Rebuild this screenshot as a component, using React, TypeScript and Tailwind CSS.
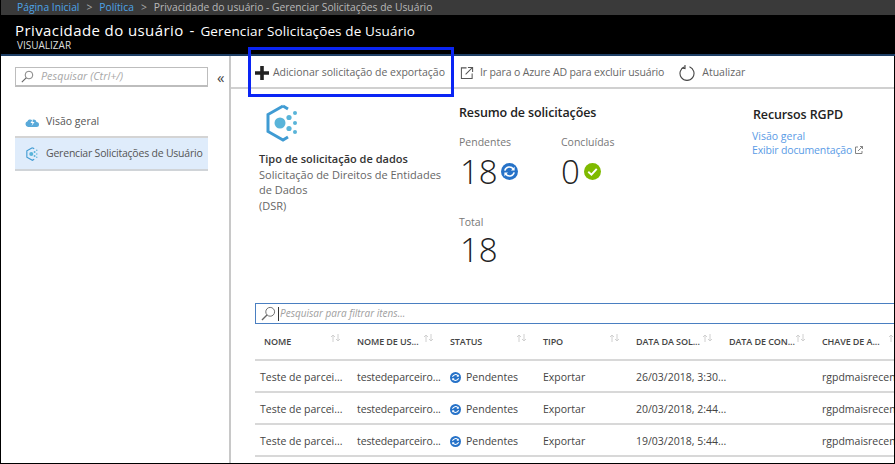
import React from "react";

const font = { fontFamily: '"Open Sans", "Noto Sans", sans-serif' };

function HexIcon({ size }: { size: number }) {
  return (
    <svg width={size} height={size} viewBox="0 0 36 38" fill="none">
      <path d="M19 2 L4 10.5 V27.5 L19 36 L24 33 M24 5 L19 2" stroke="#3f9bd3" strokeWidth="3" fill="none" />
      <circle cx="16" cy="19" r="5.5" fill="#59b4d9" />
      <circle cx="25" cy="13.5" r="2.6" fill="#59b4d9" />
      <circle cx="25" cy="24.5" r="2.6" fill="#59b4d9" />
      <circle cx="31" cy="9" r="2" fill="#59b4d9" />
      <circle cx="31" cy="19" r="2" fill="#59b4d9" />
      <circle cx="31" cy="28" r="2" fill="#59b4d9" />
    </svg>
  );
}

function SyncDot({ size }: { size: number }) {
  return (
    <svg width={size} height={size} viewBox="0 0 16 16" className="shrink-0">
      <circle cx="8" cy="8" r="8" fill="#2672c8" />
      <path d="M3.6 7.2 A4.5 4.5 0 0 1 11.6 5.6" stroke="#fff" strokeWidth="1.5" fill="none" />
      <path d="M12.4 8.8 A4.5 4.5 0 0 1 4.4 10.4" stroke="#fff" strokeWidth="1.5" fill="none" />
      <path d="M12.8 3.6 V7 H9.4 Z" fill="#fff" />
      <path d="M3.2 12.4 V9 H6.6 Z" fill="#fff" />
    </svg>
  );
}

function SearchGlass({ size }: { size: number }) {
  return (
    <svg width={size} height={size} viewBox="0 0 16 16" fill="none" stroke="#666" strokeWidth="1">
      <circle cx="9.8" cy="6.2" r="4.7" />
      <path d="M6.4 9.6 L1 15" strokeWidth="1.4" />
    </svg>
  );
}

function SortArrows() {
  return (
    <svg width="11" height="8" viewBox="0 0 11 8" fill="none" stroke="#d0d0d0" strokeWidth="1" className="absolute top-[-1px] right-[3px]">
      <path d="M3 8 V1 M1 3 L3 1 L5 3" />
      <path d="M8 0 V7 M6 5 L8 7 L10 5" />
    </svg>
  );
}

const columns = ["NOME", "NOME DE US...", "STATUS", "TIPO", "DATA DA SOL...", "DATA DE CON...", "CHAVE DE A..."];
const rows = [
  "26/03/2018, 3:30...",
  "20/03/2018, 2:44...",
  "19/03/2018, 5:44...",
];

export default function App() {
  return (
    <div className="relative w-[895px] h-[464px] overflow-hidden bg-white flex flex-col border-l border-black" style={font}>
      <div className="h-[15px] bg-[#3a3a3a] flex items-center pl-4 text-[10.3px] leading-none whitespace-nowrap text-[#b8b8b8]">
        <span className="text-[#4da3e6]">Página Inicial</span>
        <span className="mx-[7px] text-[#aaa]">&gt;</span>
        <span className="text-[#4da3e6]">Política</span>
        <span className="mx-[7px] text-[#aaa]">&gt;</span>
        <span>Privacidade do usuário - Gerenciar Solicitações de Usuário</span>
      </div>
      <div className="h-[41px] bg-black border-b-2 border-[#1e3f66] pl-[14px] pt-[5px] text-white whitespace-nowrap">
        <div className="flex items-baseline leading-[20px]">
          <span className="text-[15px] tracking-[0.027em]">Privacidade do usuário</span>
          <span className="text-[15px] mx-[6px]">-</span>
          <span className="text-[13.5px] tracking-[0.01em]">Gerenciar Solicitações de Usuário</span>
        </div>
        <div className="text-[10px] leading-[10px] -mt-[1px] pl-[2px] text-[#ddd]">VISUALIZAR</div>
      </div>
      <div className="flex flex-1 min-h-0">
        <div className="w-[230px] shrink-0 border-r-2 border-[#c8c8c8] pt-[11px] pl-[14px]">
          <div className="flex items-center">
            <div className="w-[193px] h-[20px] border border-[#bdbdbd] border-b-2 flex items-center pl-[5px] gap-[7px]">
              <SearchGlass size={13} />
              <span className="text-[10.8px] italic text-[#a8a8a8]">Pesquisar (Ctrl+/)</span>
            </div>
            <span className="ml-[9px] text-[15px] leading-none text-[#444]">«</span>
          </div>
          <div className="mt-[20px] w-[193px] h-[31px] pt-[1px] flex items-center pl-[10px] gap-[7px] text-[10.5px] text-[#555] border-b-2 border-[#d4d4d4]">
            <svg width="14" height="9" viewBox="0 0 14 9"><path d="M3 9 A3 3 0 0 1 2.5 3.2 A3 3 0 0 1 7 2 A3 3 0 0 1 11.5 4 A2.5 2.5 0 0 1 11.5 9 Z" fill="#59a9d9" /><path d="M8 1 L5.5 5 H7.5 L6.5 8 L9.5 4 H7.5 Z" fill="#fff" /></svg>
            <span>Visão geral</span>
          </div>
          <div className="w-[193px] h-[33px] pt-[1px] bg-[#dfecfb] border-b-2 border-[#d0d4d8] flex items-center pl-[10px] gap-[7px] text-[10.5px] text-[#555] whitespace-nowrap tracking-[-0.02em]">
            <HexIcon size={14} />
            <span>Gerenciar Solicitações de Usuário</span>
          </div>
        </div>
        <div className="flex-1 min-w-0 flex flex-col overflow-hidden border-r border-black">
          <div className="h-[33px] shrink-0 border-b-2 border-[#d0d0d0] flex items-center pl-[23px] pt-[2px] text-[10.5px] text-[#666] whitespace-nowrap">
            <svg width="16" height="16" viewBox="0 0 16 16" fill="#222" className="shrink-0"><path d="M6.2 1 H9.8 V6.2 H15 V9.8 H9.8 V15 H6.2 V9.8 H1 V6.2 H6.2 Z" /></svg>
            <span className="ml-[3px] tracking-[-0.003em]">Adicionar solicitação de exportação</span>
            <svg width="14" height="14" viewBox="0 0 15 15" fill="none" stroke="#555" strokeWidth="1.1" className="ml-[15px] shrink-0">
              <path d="M7 2 H1.5 V13.5 H13 V8" /><path d="M6 9 L13.5 1.5 M8.5 1.5 H13.5 V6.5" />
            </svg>
            <span className="ml-[6px] tracking-[-0.012em]">Ir para o Azure AD para excluir usuário</span>
            <svg width="16" height="16" viewBox="0 0 16 16" fill="none" stroke="#444" strokeWidth="1.1" className="ml-[15px] shrink-0">
              <path d="M5.5 1.8 A7 7 0 1 0 10.5 1.8" /><path d="M6 0 L6 3.5 L2.8 3" />
            </svg>
            <span className="ml-[7px]">Atualizar</span>
          </div>
          <div className="flex h-[214px] shrink-0">
            <div className="w-[204px] shrink-0 pl-[28px] pt-[15px]">
              <div className="ml-[4px]"><HexIcon size={38} /></div>
              <div className="mt-[9px] text-[11px] leading-[16px] font-semibold text-[#333] whitespace-nowrap">Tipo de solicitação de dados</div>
              <div className="text-[11px] leading-[15px] text-[#666] w-[190px] whitespace-nowrap">
                Solicitação de Direitos de Entidades<br />de Dados<br /><span className="leading-[18px]">(DSR)</span>
              </div>
            </div>
            <div className="w-[317px] shrink-0 pl-[24px] pt-[16px]">
              <div className="text-[12.5px] leading-[16px] font-semibold text-[#222] tracking-[-0.01em]">Resumo de solicitações</div>
              <div className="flex mt-[14px]">
                <div className="w-[102px]">
                  <div className="text-[10.5px] leading-[14px] text-[#777]">Pendentes</div>
                  <div className="flex items-center gap-[3px] h-[44px] pl-[1px]">
                    <span className="text-[33px] leading-none font-light text-[#222]">18</span>
                    <SyncDot size={17} />
                  </div>
                </div>
                <div>
                  <div className="text-[10.5px] leading-[14px] text-[#777]">Concluídas</div>
                  <div className="flex items-center gap-[4px] h-[44px]">
                    <span className="text-[33px] leading-none font-light text-[#222]">0</span>
                    <svg width="17" height="17" viewBox="0 0 16 16" className="shrink-0"><circle cx="8" cy="8" r="8" fill="#7fba00" /><path d="M4 8.3 L7 11 L12 5.5" stroke="#fff" strokeWidth="1.8" fill="none" /></svg>
                  </div>
                </div>
              </div>
              <div className="mt-[22px] text-[10.5px] leading-[14px] text-[#777]">Total</div>
              <div className="text-[33px] leading-[42px] font-light text-[#222] pl-[1px]">18</div>
            </div>
            <div className="pt-[18px] text-[10.5px] whitespace-nowrap">
              <div className="text-[12.5px] leading-[16px] font-semibold text-[#222] tracking-[-0.01em] pl-[1px]">Recursos RGPD</div>
              <div className="mt-[6px] leading-[14px] text-[#5a9be6]">Visão geral</div>
              <div className="leading-[14px] text-[#5a9be6] flex items-center gap-[3px] tracking-[-0.015em]">
                Exibir documentação
                <svg width="8" height="8" viewBox="0 0 8 8" fill="none" stroke="#777" strokeWidth="0.9"><path d="M3 1 H.5 V7.5 H7 V5" /><path d="M3 5 L7.5 .5 M5 .5 H7.5 V3" /></svg>
              </div>
            </div>
          </div>
          <div className="ml-[24px] shrink-0 w-[700px]">
            <div className="h-[21px] border border-[#4a7fc1] flex items-center pl-[5px] bg-white">
              <SearchGlass size={15} />
              <span className="ml-[2px] w-px h-[14px] bg-[#333]" />
              <span className="ml-[1px] text-[10px] italic text-[#a0a0a0]">Pesquisar para filtrar itens...</span>
            </div>
            <div className="grid grid-cols-[repeat(7,93px)] h-[37px] pt-[1px] border-b-2 border-[#d8d8d8] items-center text-[9px] font-semibold text-[#444] whitespace-nowrap">
              {columns.map((c) => (
                <div key={c} className="pl-[9px]">
                  <div className="relative w-[80px] tracking-[-0.01em]">
                    {c}
                    <SortArrows />
                  </div>
                </div>
              ))}
            </div>
            {rows.map((d) => (
              <div key={d} className="grid grid-cols-[repeat(7,93px)] h-[32px] pt-[3px] border-b-2 border-[#d8d8d8] items-center text-[10.5px] text-[#444] whitespace-nowrap">
                <div className="pl-[5px]">Teste de parcei...</div>
                <div className="pl-[9px] tracking-[-0.01em]">testedeparceiro...</div>
                <div className="pl-[9px] flex items-center gap-[5px]"><SyncDot size={11} />Pendentes</div>
                <div className="pl-[9px]">Exportar</div>
                <div className="pl-[9px]">{d}</div>
                <div />
                <div className="pl-[9px] overflow-hidden">rgpdmaisrecen</div>
              </div>
            ))}
          </div>
        </div>
      </div>
      <div className="h-[1px] bg-black absolute left-0 right-0 bottom-0" />
      <div className="absolute left-[247px] top-[47px] w-[206px] h-[50px] border-[3px] border-[#0a25f5]" />
    </div>
  );
}
